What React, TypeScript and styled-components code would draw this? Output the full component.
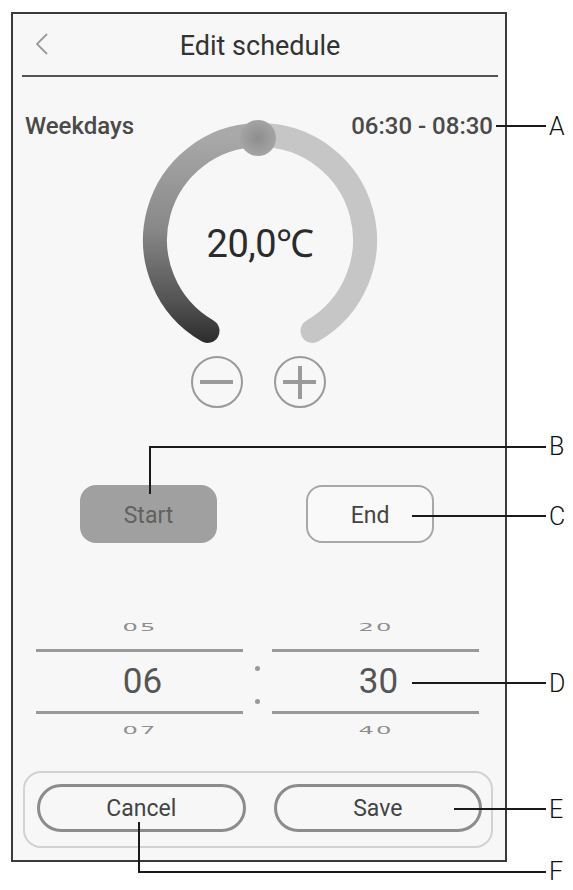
import React from "react";
import styled, { createGlobalStyle } from "styled-components";

// Edit schedule screen, with the A–F callouts of the manual page drawn over it.

const Global = createGlobalStyle`
  html, body { margin: 0; padding: 0; background: #ffffff; }
  body { font-family: Roboto, "Noto Sans", "DejaVu Sans", sans-serif; }
`;

const Page = styled.div`
  position: relative;
  width: 573px;
  height: 890px;
  padding: 12px 0 0 11px;
  box-sizing: border-box;
  background: #fff;
  overflow: hidden;
`;

const Phone = styled.div`
  width: 496px;
  height: 850px;
  box-sizing: border-box;
  border: 2px solid #3a3a3a;
  background: #f7f7f7;
  display: flex;
  flex-direction: column;
  padding-bottom: 12px;
`;

// ── Header ────────────────────────────────────────────────────────────────────

const Header = styled.div`
  height: 61px;
  margin: 0 7px 0 9px;
  border-bottom: 2px solid #555;
  display: grid;
  grid-template-columns: 40px 1fr 40px;
  align-items: center;
`;

const Back = styled.div`
  display: flex;
  align-items: center;
  padding-left: 13px;
  padding-bottom: 2px;
`;

const Title = styled.div`
  text-align: center;
  font-size: 27px;
  color: #333;
  padding-top: 2px;
`;

// ── Dial ──────────────────────────────────────────────────────────────────────

const InfoRow = styled.div`
  margin: 35px 12px 0 12px;
  height: 28px;
  display: flex;
  justify-content: space-between;
  align-items: center;
  font-size: 24px;
  font-weight: 500;
  color: #4a4a4a;
  position: relative;
  z-index: 1;
`;

const Dial = styled.div`
  position: relative;
  width: 250px;
  height: 232px;
  margin: -24px auto 0;
  transform: translateX(1px);
`;

const Readout = styled.div`
  position: absolute;
  left: 0;
  right: 0;
  top: 106px;
  text-align: center;
  font-size: 38px;
  line-height: 44px;
  color: #2b2b2b;
  letter-spacing: -0.5px;
`;

const StepRow = styled.div`
  margin-top: 8px;
  display: flex;
  justify-content: center;
  gap: 31px;
  transform: translateX(-1px);
`;

const StepBtn = styled.div`
  width: 52px;
  height: 52px;
  box-sizing: border-box;
  border: 2.5px solid #9a9a9a;
  border-radius: 50%;
  position: relative;
  display: flex;
  align-items: center;
  justify-content: center;
`;

const Bar = styled.span<{ $vertical?: boolean }>`
  position: absolute;
  background: #9a9a9a;
  width: ${(p) => (p.$vertical ? "4px" : "33px")};
  height: ${(p) => (p.$vertical ? "33px" : "4px")};
`;

// ── Start / End ───────────────────────────────────────────────────────────────

const ModeRow = styled.div`
  margin-top: 77px;
  display: flex;
  padding-left: 67px;
  gap: 89px;
`;

const ModeBtn = styled.div<{ $active: boolean }>`
  width: ${(p) => (p.$active ? "137px" : "128px")};
  height: 58px;
  box-sizing: border-box;
  border-radius: 16px;
  border: 2.5px solid ${(p) => (p.$active ? "#a0a0a0" : "#a8a8a8")};
  background: ${(p) => (p.$active ? "#a0a0a0" : "#f9f9f9")};
  color: ${(p) => (p.$active ? "#616161" : "#444")};
  display: flex;
  align-items: center;
  justify-content: center;
  font-size: 23px;
  padding-top: 2px;
`;

// ── Time picker ───────────────────────────────────────────────────────────────

const Picker = styled.div`
  margin: 72px 22px 0 23px;
  display: grid;
  grid-template-columns: 207px 29px 207px;
`;

const Column = styled.div`
  display: flex;
  flex-direction: column;
  align-items: center;
`;

const Faint = styled.div<{ $gap: number }>`
  height: 24px;
  margin-top: ${(p) => p.$gap}px;
  display: flex;
  align-items: center;
  justify-content: center;
  font-family: "DejaVu Sans", sans-serif;
  font-size: 11px;
  letter-spacing: 1px;
  color: #8e8e8e;
  transform: scaleX(2.2);
`;

const Rule = styled.div<{ $gap: number }>`
  align-self: stretch;
  height: 3px;
  margin-top: ${(p) => p.$gap}px;
  background: #999;
`;

const Value = styled.div`
  height: 59px;
  display: flex;
  align-items: center;
  justify-content: center;
  font-size: 35px;
  color: #555;
  padding-left: 6px;
`;

const Colon = styled.div`
  display: flex;
  flex-direction: column;
  align-items: center;
  justify-content: center;
  gap: 28px;
  padding-top: 12px;
`;

const Dot = styled.span`
  width: 5px;
  height: 5px;
  border-radius: 50%;
  background: #999;
`;

// ── Footer ────────────────────────────────────────────────────────────────────

const Footer = styled.div`
  margin: auto 12px 0 10px;
  padding: 11px 9px 14px 12px;
  border: 2px solid #d2d2d2;
  border-radius: 18px;
  display: flex;
  gap: 28px;
`;

const FooterBtn = styled.div`
  flex: 1;
  height: 48px;
  box-sizing: border-box;
  border: 3px solid #8c8c8c;
  border-radius: 24px;
  display: flex;
  align-items: center;
  justify-content: center;
  font-size: 23px;
  color: #444;
`;

// ── Callouts ──────────────────────────────────────────────────────────────────

const Callouts = styled.svg`
  position: absolute;
  left: 0;
  top: 0;
  pointer-events: none;
`;

const CALLOUTS = [
  { id: "A", d: "M496 126 H546", y: 126 },
  { id: "B", d: "M150 494 V447 H546", y: 446 },
  { id: "C", d: "M412 516 H546", y: 516 },
  { id: "D", d: "M412 683 H546", y: 683 },
  { id: "E", d: "M454 809 H546", y: 809 },
  { id: "F", d: "M139 822 V872 H546", y: 871 },
];

// arc geometry (dial local coords)
const CX = 125;
const CY = 124;
const R = 105;
const pt = (deg: number) => {
  const a = (deg * Math.PI) / 180;
  return [CX + R * Math.sin(a), CY - R * Math.cos(a)];
};
const [lx, ly] = pt(-150);
const [rx, ry] = pt(150);
const [tx, ty] = pt(0);

export default function App() {
  return (
    <Page>
      <Global />
      <Phone>
        <Header>
          <Back>
            <svg width="14" height="24" viewBox="0 0 14 24">
              <polyline points="12,2 2,12 12,22" fill="none" stroke="#9a9a9a" strokeWidth="1.8" />
            </svg>
          </Back>
          <Title>Edit schedule</Title>
          <div />
        </Header>

        <InfoRow>
          <span>Weekdays</span>
          <span>06:30 - 08:30</span>
        </InfoRow>

        <Dial>
          <svg width="250" height="232" viewBox="0 0 250 232">
            <defs>
              <linearGradient id="cold" gradientUnits="userSpaceOnUse" x1="0" y1={ty} x2="0" y2={ly + 12}>
                <stop offset="0" stopColor="#a9a9a9" />
                <stop offset="0.45" stopColor="#888" />
                <stop offset="0.8" stopColor="#535353" />
                <stop offset="1" stopColor="#2c2c2c" />
              </linearGradient>
              <radialGradient id="knob">
                <stop offset="0" stopColor="#8e8e8e" />
                <stop offset="1" stopColor="#a4a4a4" />
              </radialGradient>
            </defs>
            <path
              d={`M${rx} ${ry} A${R} ${R} 0 0 0 ${tx} ${ty}`}
              fill="none"
              stroke="#c6c6c6"
              strokeWidth="24"
              strokeLinecap="round"
            />
            <path
              d={`M${lx} ${ly} A${R} ${R} 0 0 1 ${tx} ${ty}`}
              fill="none"
              stroke="url(#cold)"
              strokeWidth="24"
              strokeLinecap="round"
            />
            <circle cx="123" cy="22" r="18" fill="url(#knob)" />
          </svg>
          <Readout>20,0℃</Readout>
        </Dial>

        <StepRow>
          <StepBtn>
            <Bar />
          </StepBtn>
          <StepBtn>
            <Bar />
            <Bar $vertical />
          </StepBtn>
        </StepRow>

        <ModeRow>
          <ModeBtn $active>Start</ModeBtn>
          <ModeBtn $active={false}>End</ModeBtn>
        </ModeRow>

        <Picker>
          <Column>
            <Faint $gap={0}>05</Faint>
            <Rule $gap={10} />
            <Value>06</Value>
            <Rule $gap={0} />
            <Faint $gap={4}>07</Faint>
          </Column>
          <Colon>
            <Dot />
            <Dot />
          </Colon>
          <Column>
            <Faint $gap={0}>20</Faint>
            <Rule $gap={10} />
            <Value>30</Value>
            <Rule $gap={0} />
            <Faint $gap={4}>40</Faint>
          </Column>
        </Picker>

        <Footer>
          <FooterBtn>Cancel</FooterBtn>
          <FooterBtn>Save</FooterBtn>
        </Footer>
      </Phone>

      <Callouts width="573" height="890" viewBox="0 0 573 890">
        {CALLOUTS.map((c) => (
          <g key={c.id}>
            <path d={c.d} fill="none" stroke="#1a1a1a" strokeWidth="2" />
            <text
              x="549"
              y={c.y}
              dominantBaseline="central"
              fontFamily="Roboto, sans-serif"
              fontWeight="300"
              fontSize="25"
              fill="#111"
            >
              {c.id}
            </text>
          </g>
        ))}
      </Callouts>
    </Page>
  );
}
